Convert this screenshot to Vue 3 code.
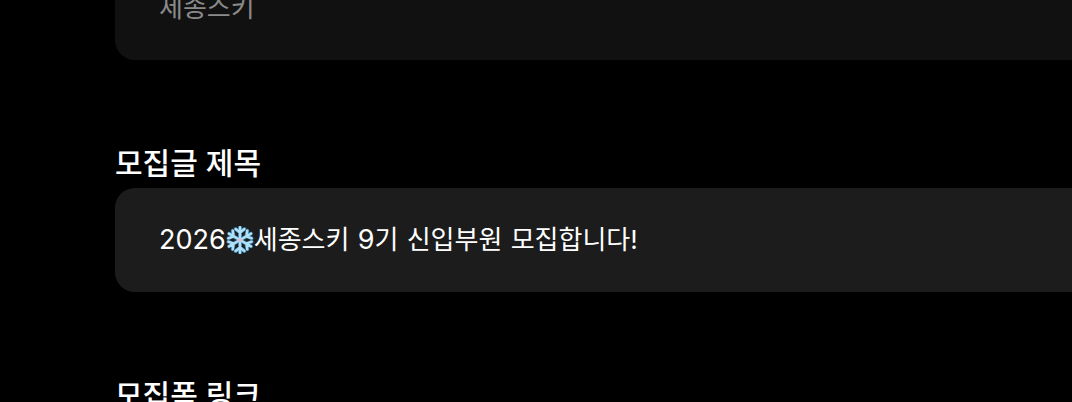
<script setup>
const arms = [0, 60, 120, 180, 240, 300]
</script>

<template>
  <main class="page">
    <section class="field field-first">
      <div class="box box-muted">
        <span class="value-muted">세종스키</span>
      </div>
    </section>
    <section class="field">
      <h2 class="label">모집글 제목</h2>
      <div class="box box-active">
        <span class="value"><span class="num">2026</span><svg class="flake" viewBox="-16 -16 32 32" aria-hidden="true">
          <g v-for="a in arms" :key="a" :transform="`rotate(${a})`">
            <path class="arm-o" d="M0 0V-14.5M0 -8.5L-5 -12.5M0 -8.5L5 -12.5" />
          </g>
          <g v-for="a in arms" :key="`i${a}`" :transform="`rotate(${a})`">
            <path class="arm" d="M0 0V-14.5M0 -8.5L-5 -12.5M0 -8.5L5 -12.5" />
          </g>
          <circle r="2" fill="#e9b4c4" />
        </svg>세종스키 <span class="num">9</span>기 신입부원 모집합니다!</span>
      </div>
    </section>
    <section class="field">
      <h2 class="label">모집폼 링크</h2>
    </section>
  </main>
</template>

<style>
html, body { margin: 0; background: #000; }
</style>

<style scoped>
.page {
  box-sizing: border-box;
  width: 1072px;
  height: 402px;
  overflow: hidden;
  padding-left: 115px;
  display: flex;
  flex-direction: column;
  gap: 84px;
  background: #000;
  font-family: Inter, "Noto Sans CJK KR", sans-serif;
}
.field { display: flex; flex-direction: column; gap: 6px; flex: none; }
.field-first { margin-top: -44px; }
.label {
  margin: 0;
  height: 38px;
  line-height: 38px;
  font-size: 30px;
  font-weight: 500;
  color: #fff;
}
.box {
  box-sizing: border-box;
  width: 1000px;
  height: 104px;
  padding: 0 44px;
  border-radius: 20px;
  display: flex;
  align-items: center;
}
.box-muted { background: #111; }
.box-active { background: #1c1c1c; }
.value, .value-muted {
  font-size: 26px;
  line-height: 36px;
  white-space: nowrap;
  font-weight: 400;
  word-spacing: 1px;
}
.value { color: #fff; }
.value-muted { color: #8a8a8a; }
.num { font-size: 27px; }
.flake {
  width: 28px;
  height: 28px;
  vertical-align: -5px;
}
.arm-o { fill: none; stroke: #3a7396; stroke-width: 4.4; stroke-linecap: round; }
.arm { fill: none; stroke: #aee0f7; stroke-width: 2.8; stroke-linecap: round; }
</style>
